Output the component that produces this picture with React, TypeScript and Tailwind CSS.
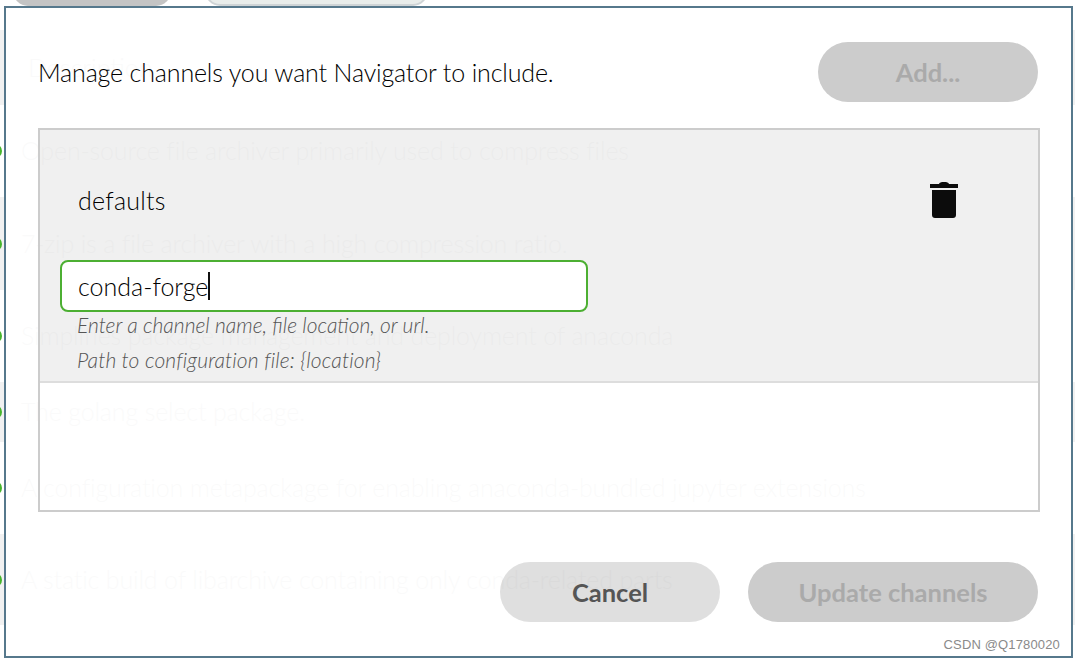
const descriptions = [
  { text: "Open-source file archiver primarily used to compress files", h: "h-[92px]", tint: "bg-white" },
  { text: "7-zip is a file archiver with a high compression ratio.", h: "h-[93px]", tint: "bg-[#f1f1f1]" },
  { text: "Simplifies package management and deployment of anaconda", h: "h-[92px]", tint: "bg-white" },
  { text: "The golang select package.", h: "h-[60px]", tint: "bg-[#f1f1f1]" },
  { text: "A configuration metapackage for enabling anaconda-bundled jupyter extensions", h: "h-[92px]", tint: "bg-white" },
  { text: "A static build of libarchive containing only conda-related parts", h: "h-[91px]", tint: "bg-[#f1f1f1]" },
];

const font = "font-['Lato','Noto_Sans',sans-serif]";

function TrashIcon() {
  return (
    <svg width="28" height="36" viewBox="0 0 28 36" fill="#0c0c0c">
      <path d="M0 2h9c.5-1.500 2-2 5-2s4.500.5 5 2h9v4H0z" />
      <path d="M2 8h24v25c0 1.800-1.200 3-3 3H5c-1.800 0-3-1.200-3-3z" />
    </svg>
  );
}

export default function App() {
  return (
    <div className={`relative w-[1075px] h-[660px] overflow-hidden bg-white ${font}`}>
      {/* page behind the dialog */}
      <div className="flex gap-[34px] pl-[13px] h-[30px]">
        <div className="w-[158px] h-[30px] -mt-[24px] rounded-[15px] bg-[#c4c4c4]" />
        <div className="w-[223px] h-[30px] -mt-[24px] rounded-[15px] border-2 border-[#cfd4d6] bg-[#e9edeb]" />
      </div>
      <div className="flex items-center h-[75px] pl-[28px] bg-[#f1f1f1]">
        <span className="text-[25px] font-light text-[#333]">Description</span>
      </div>
      {descriptions.map((d) => (
        <div key={d.text} className={`flex items-center gap-[19px] ${d.h} ${d.tint}`}>
          <span className="w-[14px] h-[14px] -ml-[12px] shrink-0 rounded-full bg-[#45b52b]" />
          <span className="text-[25px] font-light tracking-[-0.15px] text-[#333] whitespace-nowrap">{d.text}</span>
        </div>
      ))}

      {/* dialog */}
      <div className="absolute left-[4px] top-[6px] w-[1069px] h-[652px] border-2 border-[#56788c] bg-white/[0.975] flex flex-col pl-[32px] pr-[33px]">
        <div className="flex items-center justify-between pt-[34px] h-[120px] shrink-0">
          <span className="text-[25px] leading-[30px] font-light tracking-[-0.15px] text-black -mt-[26px]">Manage channels you want Navigator to include.</span>
          <button className="w-[220px] h-[60px] -mt-[26px] rounded-[30px] bg-[#cccccc] text-[25.5px] font-bold text-[#aaaaaa]">Add...</button>
        </div>
        <div className="w-[1002px] h-[384px] border-2 border-[#cccccc] flex flex-col shrink-0">
          <div className="h-[251px] bg-black/[0.06] pt-[50px]">
            <div className="flex items-center justify-between pl-[38px] pr-[80px] h-[40px]">
              <span className="text-[25px] font-light tracking-[0.25px] text-black translate-y-[1px]">defaults</span>
              <TrashIcon />
            </div>
            <div className="ml-[20px] mt-[40px] w-[528px] h-[52px] rounded-[8px] border-2 border-[#4caf32] bg-white flex items-center pl-[16px]">
              <span className="text-[25px] font-light text-black border-r-2 border-[#111] leading-[28px]">conda-forge</span>
            </div>
            <p className="pl-[37px] -mt-[5px] text-[21px] leading-[35px] font-light italic text-[#555]">Enter a channel name, file location, or url.</p>
            <p className="pl-[37px] text-[21px] leading-[35px] font-light italic tracking-[0.13px] text-[#555]">Path to configuration file: {"{location}"}</p>
          </div>
          <div className="flex-1 border-t-2 border-[#dddddd]" />
        </div>
        <div className="flex justify-end gap-[28px] pt-[50px]">
          <button className="w-[220px] h-[60px] rounded-[30px] bg-black/[0.125] text-[25.5px] font-bold text-[#555555]">Cancel</button>
          <button className="w-[290px] h-[60px] rounded-[30px] bg-[#cccccc] text-[25.5px] font-bold text-[#aaaaaa]">Update channels</button>
        </div>
      </div>
      <span className="absolute right-[15px] top-[635px] text-[13px] tracking-[0.15px] font-['Liberation_Sans',sans-serif] text-[#8a8a8a]">CSDN @Q1780020</span>
    </div>
  );
}
